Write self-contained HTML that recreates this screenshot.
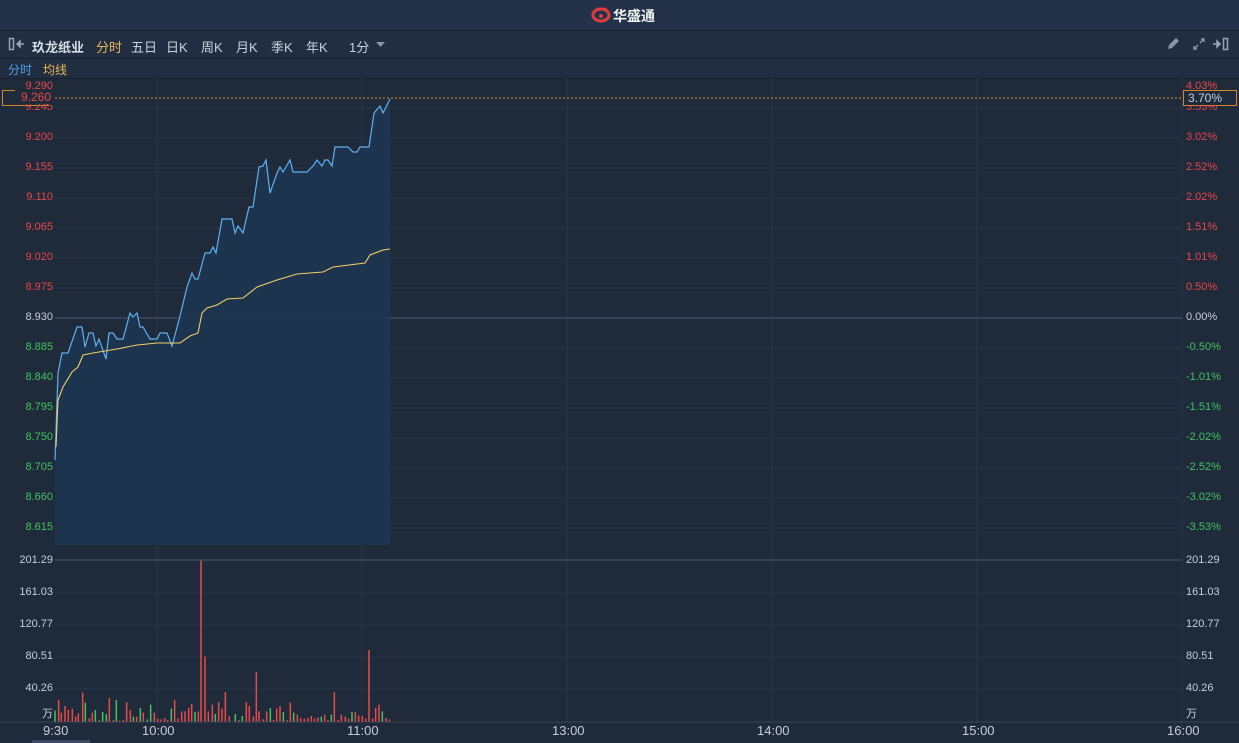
<!DOCTYPE html>
<html><head><meta charset="utf-8"><style>
*{margin:0;padding:0}
body{width:1239px;height:743px;background:#1f2a3b;overflow:hidden;position:relative;font-family:"Liberation Sans","Noto Sans CJK SC",sans-serif;}
.t{position:absolute;white-space:nowrap}
#top{position:absolute;left:0;top:0;width:1239px;height:30px;background:#243249;border-bottom:1px solid #18212e}
#tb{position:absolute;left:0;top:31px;width:1239px;height:27px;background:#212d40;border-bottom:1px solid #18212e}
#tb2{position:absolute;left:0;top:59px;width:1239px;height:19px;background:#212d40;border-bottom:1px solid #18212e}
.m{font-size:13px;color:#c9d2de;top:5px}
.l{font-size:11px;right:1186px;text-align:right}
.r{font-size:11px;left:1186px}
.red{color:#e8474a}.grn{color:#3fc45f}.wh{color:#c6cedb}
</style></head><body>
<div id="top"></div>
<svg class="t" style="left:590px;top:7px" width="22" height="16" viewBox="0 0 22 16"><path d="M3 8a8 6 0 1 0 16 0a8 6 0 0 0-16 0z" fill="none" stroke="#e23b3b" stroke-width="3"/><path d="M6 3l2-3 2 3 2-3 2 3 2-3 1 3" fill="#e23b3b"/><circle cx="11" cy="9" r="2" fill="#e23b3b"/></svg>
<div class="t" style="left:613px;top:6px;font-size:14px;font-weight:bold;color:#f2f2f2">华盛通</div>
<div id="tb"></div>
<svg class="t" style="left:8px;top:37px" width="18" height="14"><rect x="1.5" y="1.5" width="4" height="11" fill="none" stroke="#9aa4b2" stroke-width="1.5"/><path d="M9 7h7M9 7l3-3v6z" stroke="#9aa4b2" stroke-width="1.5" fill="#9aa4b2"/></svg>
<div class="t m" style="left:32px;top:37px;font-weight:bold;color:#d6dde7">玖龙纸业</div>
<div class="t m" style="left:96px;top:37px;color:#e8b85a">分时</div>
<div class="t m" style="left:131px;top:37px">五日</div>
<div class="t m" style="left:166px;top:37px">日K</div>
<div class="t m" style="left:201px;top:37px">周K</div>
<div class="t m" style="left:236px;top:37px">月K</div>
<div class="t m" style="left:271px;top:37px">季K</div>
<div class="t m" style="left:306px;top:37px">年K</div>
<div class="t m" style="left:349px;top:37px">1分</div>
<svg class="t" style="left:376px;top:42px" width="9" height="6"><path d="M0 0h9L4.5 5z" fill="#8a94a3"/></svg>
<svg class="t" style="left:1166px;top:37px" width="14" height="14"><path d="M2 12l1-4 7-7 3 3-7 7z" fill="#8a94a3"/></svg>
<svg class="t" style="left:1192px;top:37px" width="14" height="14" stroke="#8a94a3" stroke-width="1.5" fill="none"><path d="M8 6l4-4M9 2h3v3M6 8l-4 4M2 9v3h3"/></svg>
<svg class="t" style="left:1212px;top:37px" width="18" height="14"><path d="M1 7h7M8 7l-3-3v6z" stroke="#9aa4b2" stroke-width="1.5" fill="#9aa4b2"/><rect x="11.5" y="1.5" width="4" height="11" fill="none" stroke="#9aa4b2" stroke-width="1.5"/></svg>
<div id="tb2"></div>
<div class="t" style="left:8px;top:61px;font-size:12px;color:#4da0e8">分时</div>
<div class="t" style="left:43px;top:61px;font-size:12px;color:#e8b85a">均线</div>

<svg class="t" style="left:0;top:0" width="1239" height="743">
<g stroke="#283548" stroke-width="1">
<line x1="55" y1="108" x2="1182" y2="108"/><line x1="55" y1="138" x2="1182" y2="138"/><line x1="55" y1="168" x2="1182" y2="168"/><line x1="55" y1="198" x2="1182" y2="198"/><line x1="55" y1="228" x2="1182" y2="228"/><line x1="55" y1="258" x2="1182" y2="258"/><line x1="55" y1="288" x2="1182" y2="288"/><line x1="55" y1="348" x2="1182" y2="348"/><line x1="55" y1="378" x2="1182" y2="378"/><line x1="55" y1="408" x2="1182" y2="408"/><line x1="55" y1="438" x2="1182" y2="438"/><line x1="55" y1="468" x2="1182" y2="468"/><line x1="55" y1="498" x2="1182" y2="498"/><line x1="55" y1="528" x2="1182" y2="528"/>
<line x1="55" y1="593" x2="1182" y2="593"/><line x1="55" y1="625" x2="1182" y2="625"/><line x1="55" y1="657" x2="1182" y2="657"/><line x1="55" y1="689" x2="1182" y2="689"/>
<line x1="157" y1="78" x2="157" y2="722"/><line x1="362" y1="78" x2="362" y2="722"/><line x1="567" y1="78" x2="567" y2="722"/><line x1="772" y1="78" x2="772" y2="722"/><line x1="977" y1="78" x2="977" y2="722"/><line x1="1182" y1="78" x2="1182" y2="743"/>
</g>
<line x1="55" y1="318" x2="1182" y2="318" stroke="#4a586d"/>
<line x1="55" y1="560" x2="1182" y2="560" stroke="#4a586d"/>
<line x1="0" y1="722" x2="1239" y2="722" stroke="#3a475a"/>
<polygon fill="#1d3652" fill-opacity="0.85" points="55,545 55,460 58,373 62,353 68,353 77,327 82,327 85,347 89,333 93,333 96,346 99,339 106,359 109,333 113,333 117,339 123,339 130,313 133,317 137,313 140,327 143,327 150,339 157,339 160,333 167,333 172,346 180,316 187,287 192,273 195,279 198,279 205,253 210,253 213,247 216,253 222,219 232,219 235,233 238,226 243,233 249,207 253,207 259,167 263,166 266,160 270,193 277,173 280,167 283,172 290,160 293,172 307,172 313,166 317,160 322,166 325,160 328,160 332,166 335,147 348,147 353,152 357,152 360,147 369,147 374,113 380,106 383,113 390,99 390,545"/>
<polyline fill="none" stroke="#5fb0f0" stroke-width="1.2" points="55,460 58,373 62,353 68,353 77,327 82,327 85,347 89,333 93,333 96,346 99,339 106,359 109,333 113,333 117,339 123,339 130,313 133,317 137,313 140,327 143,327 150,339 157,339 160,333 167,333 172,346 180,316 187,287 192,273 195,279 198,279 205,253 210,253 213,247 216,253 222,219 232,219 235,233 238,226 243,233 249,207 253,207 259,167 263,166 266,160 270,193 277,173 280,167 283,172 290,160 293,172 307,172 313,166 317,160 322,166 325,160 328,160 332,166 335,147 348,147 353,152 357,152 360,147 369,147 374,113 380,106 383,113 390,99"/>
<polyline fill="none" stroke="#f0cf6a" stroke-width="1.1" points="56,447 58,400 63,387 72,372 78,367 83,355 93,353 117,349 137,345 157,343 180,343 190,336 198,333 202,313 207,308 217,305 227,299 243,298 257,287 277,280 297,274 323,272 333,267 365,263 370,255 383,250 390,249"/>
<line x1="55" y1="98" x2="1182" y2="98" stroke="#e0902a" stroke-dasharray="2,2"/>
<g transform="translate(0,540) scale(0.33333)" stroke-width="4.5">
<g stroke="#e84a4a">
<path d="M176 480V545M184 518V545M195 498V545M205 510V545M217 506V545M227 530V545M235 520V545M248 458V545M268 534V545M277 518V545M298 540V545M328 474V545M340 540V545M358 542V545M370 540V545M380 486V545M391 510V545M410 530V545M430 518V545M463 518V545M473 536V545M483 538V545M494 534V545M503 540V545M524 480V545M534 536V545M545 514V545M555 514V545M566 504V545M575 492V545M595 514V545M603 62V545M615 350V545M625 514V545M637 494V545M656 486V545M666 506V545M676 456V545M688 528V545M717 540V545M739 486V545M748 498V545M760 530V545M769 396V545M777 514V545M790 538V545M800 514V545M820 540V545M830 506V545M840 498V545M862 540V545M871 488V545M892 524V545M902 534V545M913 536V545M924 534V545M934 528V545M944 536V545M954 532V545M974 524V545M984 540V545M1003 456V545M1014 540V545M1024 524V545M1036 530V545M1046 536V545M1066 516V545M1076 526V545M1087 528V545M1097 536V545M1107 330V545M1118 536V545M1127 504V545M1137 494V545M1158 534V545M1168 538V545"/>
</g>
<g stroke="#3fc45f">
<path d="M165 512V545M256 488V545M286 510V545M308 516V545M319 522V545M349 480V545M400 530V545M421 504V545M442 538V545M452 494V545M514 506V545M585 516V545M646 522V545M706 522V545M727 528V545M811 504V545M850 516V545M881 518V545M964 530V545M994 524V545M1056 516V545M1147 514V545"/>
</g>
</g>
</svg>

<div class="t" style="left:2px;top:90px;width:44px;height:14px;border:1px solid #d4852a"></div>
<div class="t" style="left:1183px;top:90px;width:52px;height:14px;border:1px solid #d4852a"></div>
<div class="t l red" style="top:80px">9.290</div>
<div class="t l red" style="top:101px">9.245</div>
<div class="t l red" style="top:90px;font-size:12px;background:#1f2a3b;padding:0 2px 0 6px">9.260</div>
<div class="t l red" style="top:131px">9.200</div>
<div class="t l red" style="top:161px">9.155</div>
<div class="t l red" style="top:191px">9.110</div>
<div class="t l red" style="top:221px">9.065</div>
<div class="t l red" style="top:251px">9.020</div>
<div class="t l red" style="top:281px">8.975</div>
<div class="t l wh" style="top:311px">8.930</div>
<div class="t l grn" style="top:341px">8.885</div>
<div class="t l grn" style="top:371px">8.840</div>
<div class="t l grn" style="top:401px">8.795</div>
<div class="t l grn" style="top:431px">8.750</div>
<div class="t l grn" style="top:461px">8.705</div>
<div class="t l grn" style="top:491px">8.660</div>
<div class="t l grn" style="top:521px">8.615</div>
<div class="t r red" style="top:80px">4.03%</div>
<div class="t r red" style="top:101px">3.53%</div>
<div class="t r wh" style="top:91px;font-size:12px;background:#1f2a3b;padding:0 2px">3.70%</div>
<div class="t r red" style="top:131px">3.02%</div>
<div class="t r red" style="top:161px">2.52%</div>
<div class="t r red" style="top:191px">2.02%</div>
<div class="t r red" style="top:221px">1.51%</div>
<div class="t r red" style="top:251px">1.01%</div>
<div class="t r red" style="top:281px">0.50%</div>
<div class="t r wh" style="top:311px">0.00%</div>
<div class="t r grn" style="top:341px">-0.50%</div>
<div class="t r grn" style="top:371px">-1.01%</div>
<div class="t r grn" style="top:401px">-1.51%</div>
<div class="t r grn" style="top:431px">-2.02%</div>
<div class="t r grn" style="top:461px">-2.52%</div>
<div class="t r grn" style="top:491px">-3.02%</div>
<div class="t r grn" style="top:521px">-3.53%</div>
<div class="t l wh" style="top:554px">201.29</div>
<div class="t l wh" style="top:586px">161.03</div>
<div class="t l wh" style="top:618px">120.77</div>
<div class="t l wh" style="top:650px">80.51</div>
<div class="t l wh" style="top:682px">40.26</div>
<div class="t l wh" style="top:705px">万</div>
<div class="t r wh" style="top:554px">201.29</div>
<div class="t r wh" style="top:586px">161.03</div>
<div class="t r wh" style="top:618px">120.77</div>
<div class="t r wh" style="top:650px">80.51</div>
<div class="t r wh" style="top:682px">40.26</div>
<div class="t r wh" style="top:705px">万</div>
<div class="t wh" style="left:43px;top:723px;font-size:13px">9:30</div>
<div class="t wh" style="left:142px;top:723px;font-size:13px">10:00</div>
<div class="t wh" style="left:347px;top:723px;font-size:13px">11:00</div>
<div class="t wh" style="left:552px;top:723px;font-size:13px">13:00</div>
<div class="t wh" style="left:757px;top:723px;font-size:13px">14:00</div>
<div class="t wh" style="left:962px;top:723px;font-size:13px">15:00</div>
<div class="t wh" style="left:1167px;top:723px;font-size:13px">16:00</div>
<div class="t" style="left:32px;top:740px;width:58px;height:3px;background:#3b4a62"></div>
</body></html>
